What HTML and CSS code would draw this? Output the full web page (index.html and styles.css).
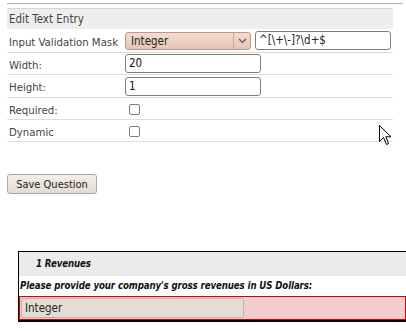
FILE: index.html
```html
<!DOCTYPE html>
<html>
<head>
<meta charset="utf-8">
<link rel="stylesheet" href="styles.css">
</head>
<body>
<div class="topline"></div>
<div class="editor">
  <div class="editor-head">Edit Text Entry</div>
  <div class="row row-first">
    <div class="label">Input Validation Mask</div>
    <div class="ctrl">
      <div class="select"><span class="select-text">Integer</span><span class="select-btn"><svg width="9" height="6" viewBox="0 0 9 6"><path d="M1 1 L4.5 4.5 L8 1" fill="none" stroke="#555" stroke-width="1.2"/></svg></span></div>
      <div class="input input-mask">^[\+\-]?\d+$</div>
    </div>
  </div>
  <div class="row">
    <div class="label">Width:</div>
    <div class="ctrl"><div class="input input-num">20</div></div>
  </div>
  <div class="row row-tall">
    <div class="label">Height:</div>
    <div class="ctrl"><div class="input input-num">1</div></div>
  </div>
  <div class="row">
    <div class="label">Required:</div>
    <div class="ctrl"><span class="check"></span></div>
  </div>
  <div class="row">
    <div class="label">Dynamic</div>
    <div class="ctrl"><span class="check"></span></div>
  </div>
</div>
<div class="actions"><button class="save">Save Question</button></div>
<div class="preview">
  <div class="preview-head">1 Revenues</div>
  <div class="preview-q">Please provide your company's gross revenues in US Dollars:</div>
  <div class="preview-ans"><div class="ans-box">Integer</div></div>
</div>
<svg class="cursor" width="13" height="21" viewBox="0 0 13 21"><path d="M0.5 0.5 L0.5 16.5 L4.5 12.5 L7.5 19.5 L9.5 18.5 L6.8 11.8 L12 11.8 Z" fill="#fff" stroke="#000" stroke-width="1"/></svg>
</body>
</html>
```
FILE: styles.css
```css
html, body {
  margin: 0;
  padding: 0;
  background: #fff;
}
body {
  font-family: "DejaVu Sans Condensed", "DejaVu Sans", sans-serif;
  font-stretch: condensed;
  font-size: 11px;
  color: #444;
  position: relative;
  width: 406px;
  height: 331px;
  overflow: hidden;
}
.topline {
  margin: 3px 3px 0 7px;
  border-top: 1px solid #b0b0b0;
}
.editor {
  margin: 4px 0 0 7px;
  width: 386px;
}
.editor-head {
  border-top: 1px solid #c8d8e8;
  background: #eeeeee;
  height: 20px;
  line-height: 21px;
  padding-left: 2px;
  font-size: 11.5px;
  color: #444;
}
.row {
  display: grid;
  grid-template-columns: 118px 1fr;
  align-items: center;
  height: 21px;
  border-bottom: 1px solid #dcdcdc;
}
.row-first {
  height: 23px;
}
.row-tall {
  height: 22px;
}
.label {
  padding-left: 2px;
  padding-top: 3px;
  font-size: 11.3px;
  color: #444;
}
.ctrl {
  display: flex;
  align-items: center;
  gap: 4px;
}
.select {
  box-sizing: border-box;
  width: 126px;
  height: 18px;
  border: 1px solid #b89a88;
  border-radius: 3px;
  background: linear-gradient(#f3ddd0, #e6c6b4);
  display: flex;
  align-items: center;
  font-size: 11.5px;
  color: #222;
}
.select-text {
  flex: 1;
  padding-left: 5px;
}
.select-btn {
  width: 16px;
  height: 16px;
  border-left: 1px solid #c7a898;
  display: flex;
  align-items: center;
  justify-content: center;
}
.input {
  box-sizing: border-box;
  height: 19px;
  border: 1px solid #8a7d70;
  border-radius: 3px;
  background: #fff;
  padding-left: 3px;
  line-height: 17px;
  font-size: 11.5px;
  color: #111;
}
.input-mask {
  width: 136px;
  color: #223;
}
.input-num {
  width: 136px;
}
.check {
  display: inline-block;
  width: 9px;
  height: 9px;
  margin-left: 4px;
  margin-top: 2px;
  border: 1px solid #8a7d70;
  border-radius: 2px;
  background: #fff;
}
.actions {
  margin: 32px 0 0 7px;
}
.save {
  box-sizing: border-box;
  width: 90px;
  height: 20px;
  padding: 0;
  border: 1px solid #b0a59a;
  border-radius: 3px;
  background: linear-gradient(#f4eee8, #e4dcd3);
  font-family: "DejaVu Sans Condensed", "DejaVu Sans", sans-serif;
  font-stretch: condensed;
  font-size: 11px;
  color: #222;
}
.preview {
  margin: 57px 0 0 18px;
  border-top: 1px solid #000;
  border-left: 1px solid #000;
  border-bottom: 2px solid #000;
}
.preview-head {
  background: #ebebeb;
  height: 24px;
  line-height: 24px;
  padding-left: 17px;
  font-weight: bold;
  font-style: italic;
  font-size: 9.6px;
  letter-spacing: -0.1px;
  color: #111;
}
.preview-q {
  height: 20px;
  line-height: 19px;
  padding-left: 1px;
  font-weight: bold;
  font-style: italic;
  font-size: 9.6px;
  letter-spacing: -0.1px;
  color: #111;
}
.preview-ans {
  border: 1px solid #d00000;
  background: #f5cccc;
  padding: 1px 0 1px 1px;
}
.ans-box {
  box-sizing: border-box;
  width: 223px;
  height: 20px;
  line-height: 18px;
  border: 1px solid #bfb3a6;
  border-radius: 2px;
  background: #e5ddd4;
  padding-left: 3px;
  font-size: 11.5px;
  color: #222;
}
.cursor {
  position: absolute;
  left: 379px;
  top: 125px;
}
```
